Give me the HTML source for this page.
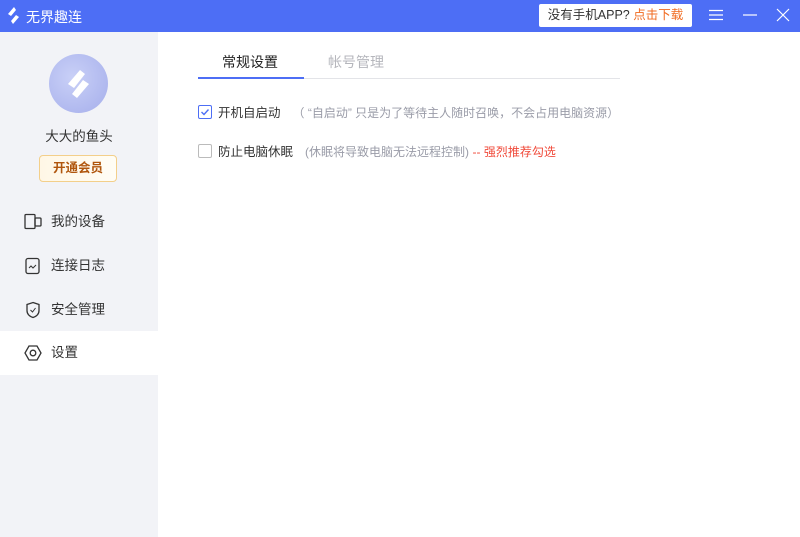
<!DOCTYPE html>
<html><head><meta charset="utf-8"><style>
*{margin:0;padding:0;box-sizing:border-box}
body{width:800px;height:537px;overflow:hidden;background:#fff;font-family:"Liberation Sans","Noto Sans CJK SC",sans-serif;position:relative;font-size:13px;color:#333}
.top{position:absolute;left:0;top:0;width:800px;height:32px;background:#4d6ef5;color:#fff}
.title{position:absolute;left:26px;top:7px;font-size:14px}
.dl{position:absolute;left:539px;top:4px;width:153px;height:23px;background:#fff;border-radius:2px;font-size:12.5px;color:#333;text-align:center;line-height:23px}
.dl b{font-weight:normal;color:#f06a1f}
.side{position:absolute;left:0;top:32px;width:158px;height:505px;background:#f2f3f7}
.av{position:absolute;left:49px;width:59px;height:59px;border-radius:50%;background:radial-gradient(circle at 40% 40%,#c9d0f7,#a5aeeb)}
.name{position:absolute;left:0;width:158px;text-align:center;font-size:13.5px}
.vip{position:absolute;left:39px;width:78px;height:27px;border:1px solid #f3cf8a;border-radius:4px;background:linear-gradient(90deg,#fff7e6,#fffdf5);color:#b0560d;font-size:12.5px;font-weight:bold;text-align:center;line-height:25px}
.item{position:absolute;left:0;width:158px;height:44px;line-height:44px;padding-left:51px;font-size:13.5px}
.item svg{position:absolute;left:24px;top:13px}
.act{background:#fff}
.tab{position:absolute;top:52px;font-size:14px}
.line{position:absolute;left:198px;top:78px;width:422px;height:1px;background:#e3e4e8}
.uline{position:absolute;left:198px;top:77px;width:106px;height:2px;background:#4d6ef5}
.row{position:absolute;left:198px;font-size:12.5px;white-space:nowrap}
.cb{display:inline-block;width:14px;height:14px;border:1px solid #bbb;border-radius:2px;vertical-align:-2px;margin-right:6px;position:relative}
.cb.on{border-color:#4d6ef5}
.g{color:#9a9ca8;margin-left:12px;font-size:12px}
.r{color:#f04a3a;font-size:12px}
</style></head><body>
<div class="top">
<svg style="position:absolute;left:7px;top:7px" width="13" height="17" viewBox="0 0 13 17"><path d="M7 0L1 7l3 2 5-6z M6 17l6-7-3-2-5 6z" fill="#fff"/></svg>
<div class="title">无界趣连</div>
<div class="dl">没有手机APP? <b>点击下载</b></div>
<svg style="position:absolute;left:709px;top:9px" width="14" height="12"><path d="M0 1.5h14M0 6h14M0 10.5h14" stroke="#fff" stroke-width="1.2"/></svg>
<svg style="position:absolute;left:743px;top:9px" width="14" height="12"><path d="M0 6h14" stroke="#fff" stroke-width="1.2"/></svg>
<svg style="position:absolute;left:776px;top:8px" width="14" height="14"><path d="M1 1l12 12M13 1L1 13" stroke="#fff" stroke-width="1.2"/></svg>
</div>
<div class="side">
<div class="av" style="top:22px"><svg width="59" height="59" viewBox="0 0 59 59"><path d="M31 16L19 30l6 4 11-14z M28 44l12-14-6-4-11 14z" fill="#fff"/></svg></div>
<div class="name" style="top:93px">大大的鱼头</div>
<div class="vip" style="top:123px">开通会员</div>
<div class="item" style="top:168px"><svg width="20" height="18" viewBox="0 0 20 18"><rect x="1" y="1.5" width="10" height="14" rx="1" fill="none" stroke="#333" stroke-width="1.3"/><rect x="11" y="5" width="6" height="8" rx="1" fill="none" stroke="#333" stroke-width="1.3"/></svg>我的设备</div>
<div class="item" style="top:212px"><svg width="18" height="18" viewBox="0 0 18 18"><rect x="2" y="1.5" width="13" height="15" rx="2" fill="none" stroke="#333" stroke-width="1.3"/><path d="M5 11l2-2 2 2 3-3" fill="none" stroke="#333" stroke-width="1"/></svg>连接日志</div>
<div class="item" style="top:256px"><svg width="18" height="18" viewBox="0 0 18 18"><path d="M9 1.5l6 2v6c0 4-3 6-6 7-3-1-6-3-6-7v-6z" fill="none" stroke="#333" stroke-width="1.3"/><path d="M6.5 9l2 2 3-4" fill="none" stroke="#333" stroke-width="1"/></svg>安全管理</div>
<div class="item act" style="top:299px"><svg width="18" height="18" viewBox="0 0 18 18"><path d="M5 2h8l4 7-4 7H5L1 9z" fill="none" stroke="#333" stroke-width="1.3"/><circle cx="9" cy="9" r="2.8" fill="none" stroke="#333" stroke-width="1.3"/></svg>设置</div>
</div>
<div class="tab" style="left:222px;color:#222">常规设置</div>
<div class="tab" style="left:328px;color:#b5b6bc">帐号管理</div>
<div class="line"></div><div class="uline"></div>
<div class="row" style="top:102px"><span class="cb on"><svg width="12" height="12" style="position:absolute;left:0;top:0"><path d="M2.5 6l2.5 2.5 4.5-5" fill="none" stroke="#4d6ef5" stroke-width="1.4"/></svg></span>开机自启动<span class="g">（ “自启动” 只是为了等待主人随时召唤，不会占用电脑资源）</span></div>
<div class="row" style="top:141px"><span class="cb"></span>防止电脑休眠<span class="g">(休眠将导致电脑无法远程控制)</span> <span class="r">-- 强烈推荐勾选</span></div>
</body></html>
